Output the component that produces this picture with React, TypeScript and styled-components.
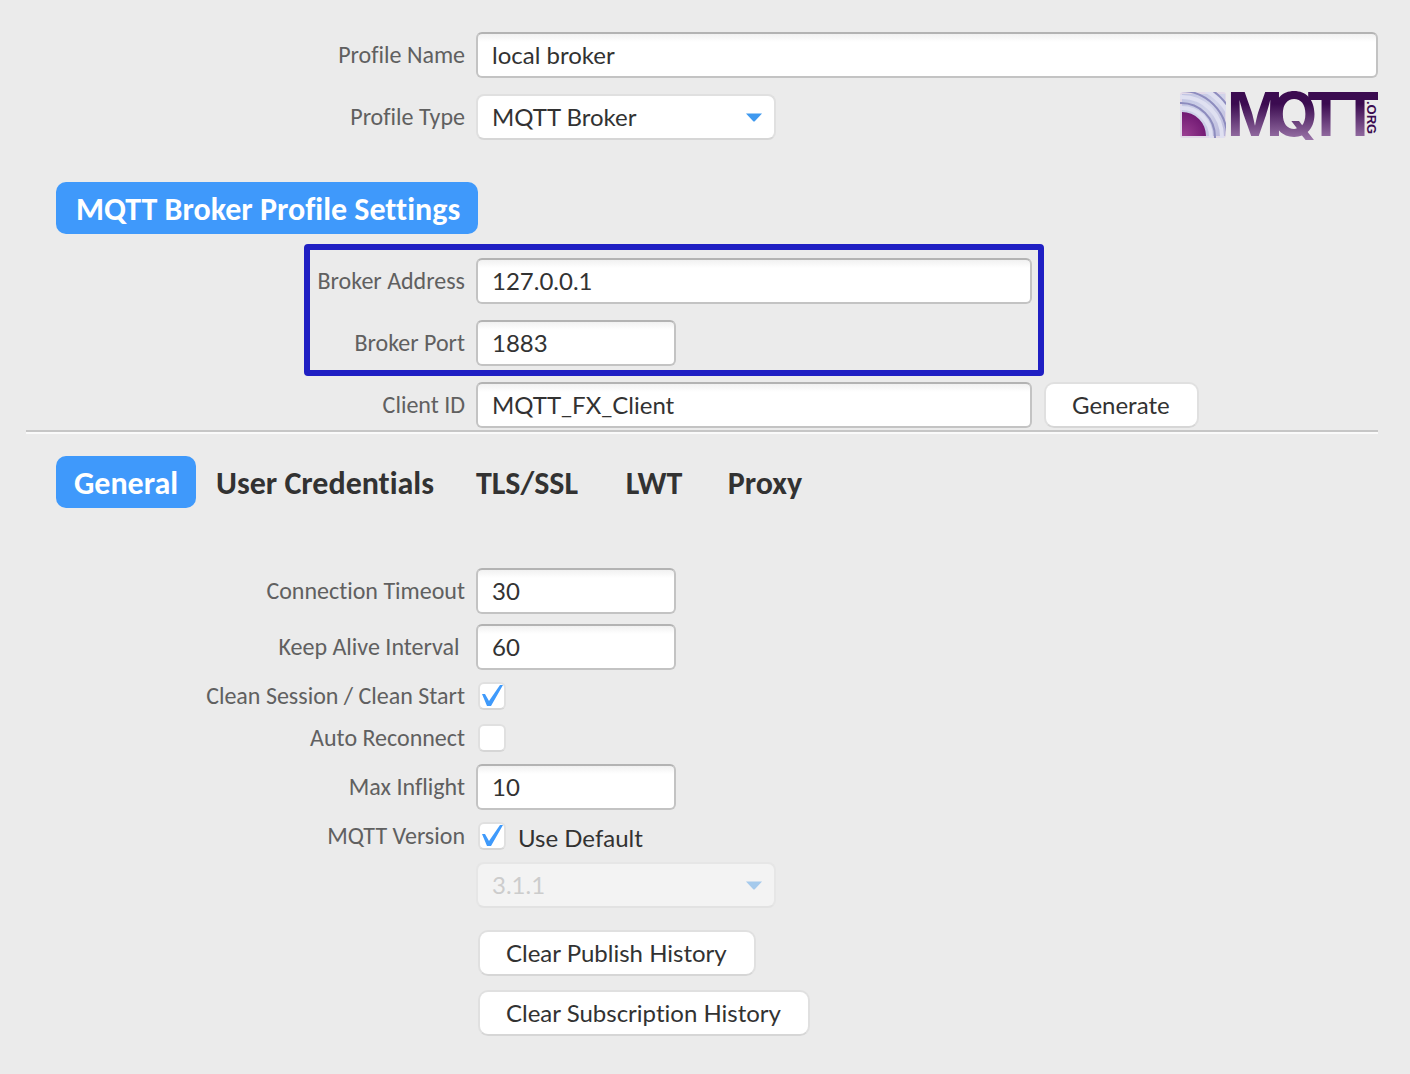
import React from "react";
import styled, { createGlobalStyle } from "styled-components";

const GlobalStyle = createGlobalStyle`
  *, *::before, *::after { box-sizing: border-box; }
  body {
    margin: 0;
    background: #ebebeb;
    color: #323232;
    font-family: Lato, "Liberation Sans", sans-serif;
    font-size: 24px;
    font-variant-ligatures: none;
  }
`;

const labelFont = `Carlito, Lato, "Liberation Sans", sans-serif`;

const Page = styled.form`
  display: flex;
  flex-direction: column;
  padding: 32px 32px 38px 26px;
`;

const Rows = styled.div<{ $gap: number }>`
  display: flex;
  flex-direction: column;
  gap: ${(p) => p.$gap}px;
`;

const Row = styled.div<{ $short?: boolean }>`
  display: grid;
  grid-template-columns: 439px minmax(0, 1fr);
  grid-template-rows: minmax(0, 1fr);
  column-gap: 11px;
  align-items: center;
  height: ${(p) => (p.$short ? 32 : 46)}px;
`;

const Label = styled.label`
  text-align: right;
  font-family: ${labelFont};
  font-size: 24px;
  line-height: 32px;
  color: #606060;
  white-space: pre;
`;

const Field = styled.div<{ $spread?: boolean }>`
  display: flex;
  align-items: center;
  gap: 12px;
  justify-content: ${(p) => (p.$spread ? "space-between" : "flex-start")};
`;

const TextInput = styled.input<{ $size: "full" | "long" | "short" }>`
  width: ${(p) => ({ full: "100%", long: "556px", short: "200px" })[p.$size]};
  height: 46px;
  padding: 0 14px 2px;
  border: 2px solid #c3c3c3;
  border-top-color: #b3b3b3;
  border-radius: 6px;
  background: linear-gradient(#f1f1f1, #fff 8px);
  color: #323232;
  font: inherit;
  font-variant-ligatures: none;
  outline: none;
`;

const SelectBox = styled.div<{ $off?: boolean }>`
  display: grid;
  align-items: center;
  width: 300px;
  opacity: ${(p) => (p.$off ? 0.4 : 1)};

  & > * { grid-area: 1 / 1; }
  svg { justify-self: end; margin-right: 14px; pointer-events: none; }
`;

const Select = styled.select`
  appearance: none;
  width: 100%;
  height: 46px;
  padding: 0 14px 2px;
  border: 2px solid #e0e0e0;
  border-bottom-color: #d6d6d6;
  border-radius: 8px;
  background: #fff;
  color: #323232;
  font: inherit;
  opacity: 1;

  &:disabled { color: #a0a0a0; }
`;

const Button = styled.button`
  height: 46px;
  padding: 0 27px 2px 26px;
  border: 2px solid #e0e0e0;
  border-bottom-color: #d6d6d6;
  border-radius: 10px;
  background: #fff;
  color: #323232;
  font: inherit;
  font-variant-ligatures: none;
`;

const CheckBox = styled.input`
  appearance: none;
  flex: none;
  width: 28px;
  height: 28px;
  margin: 0 0 0 2px;
  border: 2px solid #e0e0e0;
  border-bottom-color: #d6d6d6;
  border-radius: 6px;
  background: #fff;

  &:checked::before {
    content: "";
    display: block;
    width: 24px;
    height: 24px;
    background: #3f9afb;
    clip-path: polygon(2px 10px, 5px 10px, 9px 17px, 20px 1px, 23px 1px, 11px 22px, 7px 22px);
  }
`;

const CheckText = styled.label`
  padding-top: 2px;
`;

const Heading = styled.h1`
  align-self: flex-start;
  height: 52px;
  margin: 42px 0 24px 30px;
  padding: 2px 18px 0 20px;
  border-radius: 10px;
  background: #3f99fb;
  color: #fff;
  font-family: ${labelFont};
  font-size: 32px;
  font-weight: 700;
  line-height: 52px;
`;

const Highlight = styled.div`
  position: relative;

  &::after {
    content: "";
    position: absolute;
    top: -14px;
    bottom: -10px;
    left: 278px;
    width: 740px;
    border: 6px solid #1f1fc3;
    border-radius: 4px;
    pointer-events: none;
  }
`;

const Divider = styled.hr`
  width: 100%;
  margin: 2px 0 22px;
  border: 0;
  border-top: 2px solid #c6c6c6;
  border-bottom: 2px solid #fafafa;
`;

const Tabs = styled.div`
  display: flex;
  gap: 2px;
  margin: 0 0 60px 30px;
`;

const Tab = styled.button<{ $active?: boolean; $width: number }>`
  width: ${(p) => p.$width}px;
  height: 52px;
  padding: 2px 0 0;
  border: 0;
  border-radius: 10px;
  background: ${(p) => (p.$active ? "#3f99fb" : "transparent")};
  color: ${(p) => (p.$active ? "#fff" : "#323232")};
  font-family: ${labelFont};
  font-size: 32px;
  font-weight: 700;
  font-variant-ligatures: none;
  white-space: nowrap;
`;

const Actions = styled.div`
  display: flex;
  flex-direction: column;
  align-items: flex-start;
  gap: 14px;
  margin: 22px 0 0 452px;
`;

const Arrow = () => (
  <svg width="16" height="9" viewBox="0 0 16 9" aria-hidden="true">
    <path d="M0 0.500h16L9 8q-1 1-2 0z" fill="#3f99ef" />
  </svg>
);

const Logo = () => (
  <svg width="198" height="50" viewBox="0 0 198 50" overflow="visible" role="img" aria-label="MQTT.ORG">
    <defs>
      <linearGradient id="word" gradientUnits="userSpaceOnUse" x1="0" y1="0" x2="0" y2="48">
        <stop offset="0.25" stopColor="#3b0b50" />
        <stop offset="1" stopColor="#9a74a8" />
      </linearGradient>
      <linearGradient id="sky" x1="0" y1="0" x2="1" y2="1">
        <stop offset="0" stopColor="#c0c4e2" />
        <stop offset="0.5" stopColor="#d2d4ea" />
        <stop offset="1" stopColor="#b8b6da" />
      </linearGradient>
      <radialGradient id="core" gradientUnits="userSpaceOnUse" cx="4" cy="44" r="24">
        <stop offset="0" stopColor="#9a3f92" />
        <stop offset="1" stopColor="#701872" />
      </radialGradient>
      <clipPath id="tile">
        <rect x="0" y="0" width="46" height="46" rx="3" />
      </clipPath>
    </defs>
    <g clipPath="url(#tile)">
      <rect width="46" height="46" fill="#e2d9e8" />
      <rect x="2" y="2" width="43" height="42" fill="url(#sky)" />
      <g fill="none" stroke="#dfe0f1" strokeWidth="4">
        <circle cx="2" cy="45" r="29" />
        <circle cx="2" cy="45" r="40" />
        <circle cx="2" cy="45" r="52" />
      </g>
      <g fill="none" stroke="#8d8cbe" strokeWidth="2">
        <circle cx="1" cy="45" r="34" />
        <circle cx="1" cy="45" r="46" />
        <circle cx="1" cy="45" r="56" />
      </g>
      <path d="M2 20A24 24 0 0 1 26 44H2z" fill="url(#core)" />
    </g>
    <text
      x="47 91 126 160"
      y="44"
      fill="url(#word)"
      fontFamily="Inter, Liberation Sans, sans-serif"
      fontWeight="700"
      fontSize="60"
    >
      MQTT
    </text>
    <rect x="130" y="0" width="68" height="8" fill="#3b0b50" />
    <text
      transform="translate(187 9) rotate(90)"
      fill="#3b0b50"
      fontFamily="Liberation Sans, Arial, sans-serif"
      fontWeight="700"
      fontSize="13"
    >
      .ORG
    </text>
  </svg>
);

type NumberRowProps = { id: string; label: string; value: string };

const ShortRow = ({ id, label, value }: NumberRowProps) => (
  <Row>
    <Label htmlFor={id}>{label}</Label>
    <Field>
      <TextInput id={id} $size="short" defaultValue={value} />
    </Field>
  </Row>
);

const tabs = [
  { title: "General", width: 140 },
  { title: "User Credentials", width: 254 },
  { title: "TLS/SSL", width: 146 },
  { title: "LWT", width: 104 },
  { title: "Proxy", width: 114 },
];

export default function App() {
  return (
    <>
      <GlobalStyle />
      <Page onSubmit={(e) => e.preventDefault()}>
        <Rows $gap={16}>
          <Row>
            <Label htmlFor="name">Profile Name</Label>
            <Field>
              <TextInput id="name" $size="full" defaultValue="local broker" />
            </Field>
          </Row>
          <Row>
            <Label htmlFor="type">Profile Type</Label>
            <Field $spread>
              <SelectBox>
                <Select id="type">
                  <option>MQTT Broker</option>
                </Select>
                <Arrow />
              </SelectBox>
              <Logo />
            </Field>
          </Row>
        </Rows>

        <Heading>MQTT Broker Profile Settings</Heading>

        <Rows $gap={16}>
          <Highlight>
            <Rows $gap={16}>
              <Row>
                <Label htmlFor="address">Broker Address</Label>
                <Field>
                  <TextInput id="address" $size="long" defaultValue="127.0.0.1" />
                </Field>
              </Row>
              <ShortRow id="port" label="Broker Port" value="1883" />
            </Rows>
          </Highlight>
          <Row>
            <Label htmlFor="client">Client ID</Label>
            <Field>
              <TextInput id="client" $size="long" defaultValue="MQTT_FX_Client" />
              <Button type="button">Generate</Button>
            </Field>
          </Row>
        </Rows>

        <Divider />

        <Tabs role="tablist">
          {tabs.map((tab, i) => (
            <Tab
              key={tab.title}
              type="button"
              role="tab"
              aria-selected={i === 0}
              $active={i === 0}
              $width={tab.width}
            >
              {tab.title}
            </Tab>
          ))}
        </Tabs>

        <Rows $gap={10}>
          <ShortRow id="timeout" label="Connection Timeout" value="30" />
          <ShortRow id="keepalive" label={"Keep Alive Interval "} value="60" />
          <Row $short>
            <Label htmlFor="clean">Clean Session / Clean Start</Label>
            <Field>
              <CheckBox id="clean" type="checkbox" defaultChecked />
            </Field>
          </Row>
          <Row $short>
            <Label htmlFor="reconnect">Auto Reconnect</Label>
            <Field>
              <CheckBox id="reconnect" type="checkbox" />
            </Field>
          </Row>
          <ShortRow id="inflight" label="Max Inflight" value="10" />
          <Row $short>
            <Label htmlFor="version">MQTT Version</Label>
            <Field>
              <CheckBox id="default" type="checkbox" defaultChecked />
              <CheckText htmlFor="default">Use Default</CheckText>
            </Field>
          </Row>
          <Row>
            <span />
            <SelectBox $off>
              <Select id="version" disabled>
                <option>3.1.1</option>
              </Select>
              <Arrow />
            </SelectBox>
          </Row>
        </Rows>

        <Actions>
          <Button type="button">Clear Publish History</Button>
          <Button type="button">Clear Subscription History</Button>
        </Actions>
      </Page>
    </>
  );
}
